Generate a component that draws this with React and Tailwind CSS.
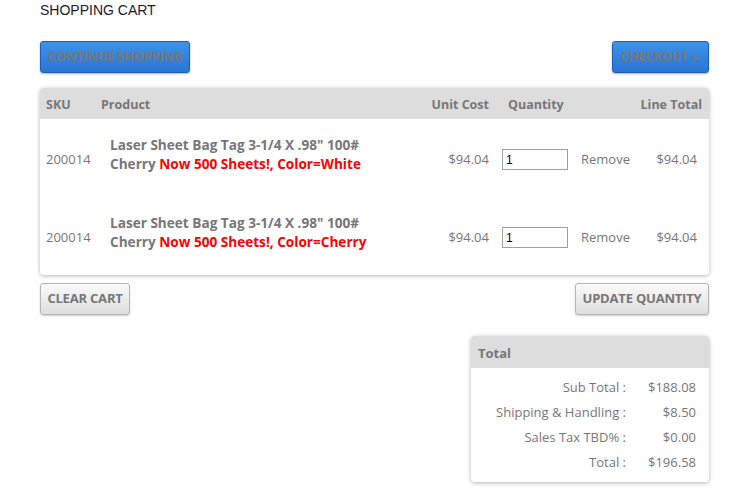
import React from 'react'

const items = [
  { sku: '200014', name: 'Laser Sheet Bag Tag 3-1/4 X .98" 100#', name2: 'Cherry', opt: 'Now 500 Sheets!, Color=White', cost: '$94.04', qty: '1', total: '$94.04' },
  { sku: '200014', name: 'Laser Sheet Bag Tag 3-1/4 X .98" 100#', name2: 'Cherry', opt: 'Now 500 Sheets!, Color=Cherry', cost: '$94.04', qty: '1', total: '$94.04' },
]

const totals = [
  ['Sub Total :', '$188.08'],
  ['Shipping & Handling :', '$8.50'],
  ['Sales Tax TBD% :', '$0.00'],
  ['Total :', '$196.58'],
]

const blueBtn = 'h-[32px] whitespace-nowrap rounded-[3px] border border-[#1d5fb8] bg-gradient-to-b from-[#3d93ea] to-[#2b74d6] px-0 text-[13px] font-bold tracking-[-0.3px] text-[#777] shadow-[0_1px_2px_rgba(0,0,0,0.3)]'
const grayBtn = 'h-[32px] whitespace-nowrap rounded-[3px] border border-[#b5b5b5] bg-gradient-to-b from-[#fafafa] to-[#dedede] px-0 text-[13px] font-bold tracking-[-0.2px] text-[#777] shadow-[0_1px_2px_rgba(0,0,0,0.2)]'

export default function App() {
  return (
    <div className="min-h-[489px] bg-white px-[40px] pt-[1px] text-[#777]" style={{ fontFamily: '"Open Sans", sans-serif' }}>
      <h1 className="mt-[1px] text-[14px] leading-[17px] text-[#1a1a2e]" style={{ fontFamily: '"Liberation Sans", Arial, sans-serif' }}>SHOPPING CART</h1>

      <div className="mt-[22px] flex w-[669px] items-center justify-between">
        <button className={blueBtn + ' w-[150px]'}>CONTINUE SHOPPING</button>
        <button className={blueBtn + ' w-[97px]'}>CHECKOUT <span className="text-[10px]">&#9658;</span></button>
      </div>

      <div className="mt-[15px] w-[669px] overflow-hidden rounded-[4px] bg-white shadow-[0_1px_4px_rgba(0,0,0,0.3)]">
        <table className="w-full table-fixed border-collapse text-[13px]">
          <colgroup>
            <col className="w-[55px]" />
            <col className="w-[290px]" />
            <col className="w-[108px]" />
            <col className="w-[78px]" />
            <col className="w-[69px]" />
            <col className="w-[69px]" />
          </colgroup>
          <thead>
            <tr className="h-[31px] bg-[#dddddd] text-[12.5px] font-bold">
              <th className="pl-[6px] pt-[3px] text-left">SKU</th>
              <th className="pl-[6px] pt-[3px] text-left">Product</th>
              <th className="pr-[4px] pt-[3px] text-right">Unit Cost</th>
              <th className="pl-[15px] pt-[3px] text-left">Quantity</th>
              <th></th>
              <th className="pr-[7px] pt-[3px] text-right">Line Total</th>
            </tr>
          </thead>
          <tbody>
            {items.map((it, i) => (
              <tr key={i} className="h-[78px]">
                <td className="pl-[6px] pt-[3px]">{it.sku}</td>
                <td className="pb-[9px] pl-[15px]">
                  <div className="text-[13.6px] font-bold leading-[19px]">
                    <div>{it.name}</div>
                    <div>{it.name2} <span className="text-[#ff0000]">{it.opt}</span></div>
                  </div>
                </td>
                <td className="pr-[4px] pt-[3px] text-right">{it.cost}</td>
                <td className="pl-[9px] pt-[3px]">
                  <input defaultValue={it.qty} className="h-[21px] w-[66px] border border-[#a0a0a0] px-[3px] text-[12px] text-[#000]" style={{ fontFamily: '"Liberation Sans", Arial, sans-serif' }} />
                </td>
                <td className="pl-[10px] pt-[3px]">Remove</td>
                <td className="pr-[12px] pt-[3px] text-right">{it.total}</td>
              </tr>
            ))}
          </tbody>
        </table>
      </div>

      <div className="mt-[8px] flex w-[669px] items-center justify-between">
        <button className={grayBtn + ' w-[90px]'}>CLEAR CART</button>
        <button className={grayBtn + ' w-[134px]'}>UPDATE QUANTITY</button>
      </div>

      <div className="ml-[431px] mt-[21px] w-[238px] overflow-hidden rounded-[4px] bg-white shadow-[0_1px_4px_rgba(0,0,0,0.3)]">
        <div className="flex h-[32px] items-center bg-[#dddddd] pl-[7px] pt-[3px] text-[13px] font-bold">Total</div>
        <div className="pb-[7px] pt-[7px] text-[13px]">
          {totals.map(([k, v]) => (
            <div key={k} className="flex h-[25px] items-center">
              <span className="w-[155px] text-right">{k}</span>
              <span className="w-[70px] text-right">{v}</span>
            </div>
          ))}
        </div>
      </div>
    </div>
  )
}
